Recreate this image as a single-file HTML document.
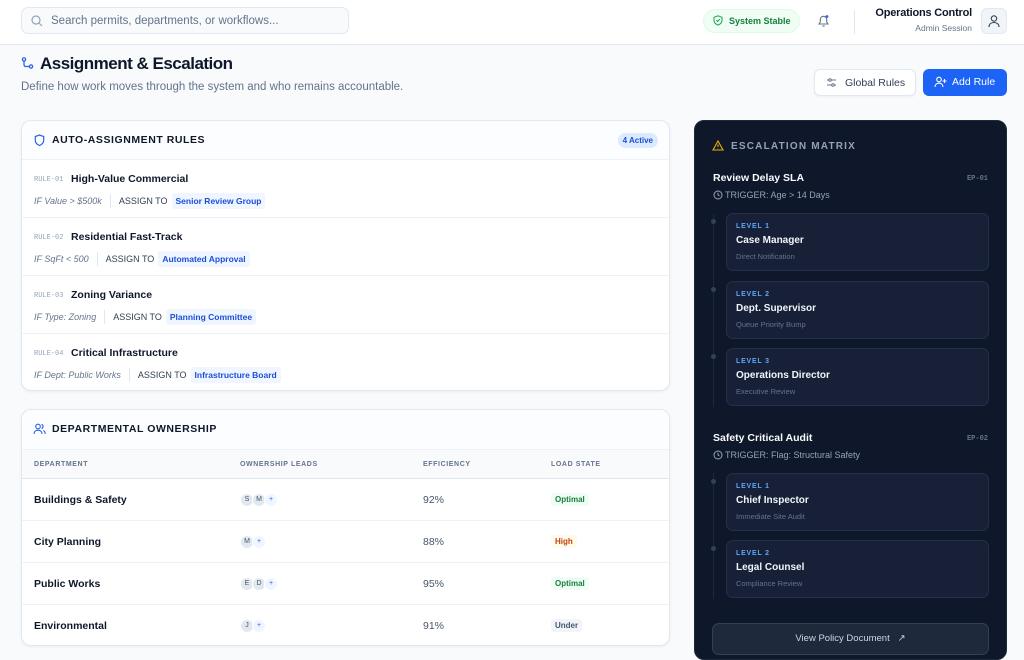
<!DOCTYPE html>
<html><head><meta charset="utf-8"><style>
*{box-sizing:border-box;margin:0;padding:0}
body{width:1024px;height:648px;overflow:hidden;background:#f8fafc;font-family:"Liberation Sans",sans-serif;color:#0f172a;position:relative}
.abs{position:absolute}
.hdr{position:absolute;left:0;top:0;width:1024px;height:45px;background:#fff;border-bottom:1px solid #e2e8f0}
.search{position:absolute;left:21px;top:7px;width:328px;height:27px;border:1px solid #e2e8f0;border-radius:7px;background:#f8fafc;font-size:11.5px;color:#64748b;padding:7px 0 0 29px}
.card{position:absolute;background:#fff;border:1px solid #e2e8f0;border-radius:10px;box-shadow:0 1px 3px rgba(0,0,0,.06);overflow:hidden}
.ch{height:39px;border-bottom:1px solid #eef2f6;background:#fcfdfe;font-size:10.5px;font-weight:bold;letter-spacing:.55px;padding:13px 0 0 30px;position:relative}
.rule{height:58px;border-bottom:1px solid #eef2f6;position:relative}
.rule:last-child{border-bottom:none}
.rid{position:absolute;left:12px;top:16px;font-family:"Liberation Mono",monospace;font-size:7px;color:#94a3b8}
.rt{position:absolute;left:49px;top:13px;font-size:10.5px;font-weight:bold}
.rc{position:absolute;left:12px;top:33px;font-size:9px;color:#64748b;font-style:italic;display:flex;align-items:center}
.rc .sep{width:1px;height:14px;background:#e2e8f0;margin:0 8px 0 8px}
.rc .as{font-style:normal;color:#334155;margin-right:4px}
.rc .tag{font-style:normal;color:#1d4ed8;background:#eff6ff;font-weight:bold;padding:3px 4px;border-radius:3px;font-size:8.5px}
.th{height:29px;background:#f8fafc;border-bottom:1px solid #e2e8f0;position:relative;font-size:7px;font-weight:bold;color:#64748b;letter-spacing:.6px}
.th span,.tr span{position:absolute}
.tr{height:42px;border-bottom:1px solid #eef2f6;position:relative}
.tr:last-child{border-bottom:none}
.dn{left:12px;top:15px;font-size:10.5px;font-weight:bold}
.ef{left:401px;top:15px;font-size:10.5px;color:#475569}
.av{width:14px;height:14px;border-radius:50%;background:#e2e8f0;font-size:7px;color:#475569;text-align:center;line-height:12px;top:14px;border:1px solid #fff}
.av.p{background:#eff6ff;color:#2563eb}
.ls{left:529px;top:14px;font-size:8px;font-weight:bold;padding:2px 4px;border-radius:3px}
.dark{position:absolute;left:694px;top:120px;width:313px;height:540px;background:#0f172a;border-radius:10px;border:1px solid #1e293b}
.lv{position:absolute;left:31px;width:263px;height:58px;background:#172036;border:1px solid #243049;border-radius:7px}
.lv .l{position:absolute;left:9px;top:9px;font-size:7px;font-weight:bold;color:#60a5fa;letter-spacing:.8px}
.lv .n{position:absolute;left:9px;top:21px;font-size:10px;font-weight:bold;color:#f1f5f9}
.lv .d{position:absolute;left:9px;top:38px;font-size:7.5px;color:#64748b}
.dot{position:absolute;left:16px;width:5px;height:5px;border-radius:50%;background:#334155}
.ep{position:absolute;right:18px;font-family:"Liberation Mono",monospace;font-size:7px;color:#64748b;font-weight:bold}
.et{position:absolute;left:18px;font-size:10.5px;font-weight:bold;color:#f8fafc}
.tg{position:absolute;left:18px;font-size:9px;color:#94a3b8}
</style></head><body>
<div class="hdr">
<div class="search">Search permits, departments, or workflows...</div>
<svg class="abs" style="left:31px;top:15px" width="12" height="12" viewBox="0 0 12 12" fill="none" stroke="#94a3b8" stroke-width="1.2"><circle cx="5" cy="5" r="4"/><path d="M8 8l3 3"/></svg>
<div class="abs" style="left:703px;top:9px;width:97px;height:24px;border-radius:12px;background:#f0fdf4;border:1px solid #dcfce7;font-size:9px;font-weight:bold;color:#15803d;padding:6px 0 0 25px">System Stable</div>
<svg class="abs" style="left:713px;top:15px" width="10" height="11" viewBox="0 0 10 11" fill="none" stroke="#16a34a" stroke-width="1"><path d="M5 .8L1 2.3v3c0 2.4 1.8 4 4 4.8 2.2-.8 4-2.4 4-4.8v-3z"/><path d="M3.3 5.3l1.2 1.2 2.3-2.4"/></svg>
<svg class="abs" style="left:817px;top:14px" width="13" height="14" viewBox="0 0 13 14" fill="none" stroke="#64748b" stroke-width="1.1"><path d="M2 10h9l-1.3-2V5.5a3.2 3.2 0 0 0-6.4 0V8z"/><path d="M5.3 12h2.4"/><circle cx="10" cy="2.5" r="1.4" fill="#2563eb" stroke="none"/></svg>
<div class="abs" style="left:854px;top:10px;width:1px;height:24px;background:#e2e8f0"></div>
<div class="abs" style="right:52px;top:7px;font-size:11px;font-weight:bold;text-align:right;letter-spacing:-.2px">Operations Control</div>
<div class="abs" style="right:52px;top:23px;font-size:8.5px;color:#64748b">Admin Session</div>
<div class="abs" style="left:981px;top:8px;width:26px;height:26px;border-radius:6px;background:#f1f5f9;border:1px solid #e2e8f0"></div>
<svg class="abs" style="left:987px;top:14px" width="14" height="14" viewBox="0 0 14 14" fill="none" stroke="#334155" stroke-width="1.1"><circle cx="7" cy="4.5" r="2.7"/><path d="M2 13c0-3 2.2-4.5 5-4.5s5 1.5 5 4.5"/></svg>
</div>
<svg class="abs" style="left:21px;top:57px" width="13" height="13" viewBox="0 0 13 13" fill="none" stroke="#2563eb" stroke-width="1.3"><circle cx="3" cy="2.5" r="1.6"/><circle cx="10" cy="9.5" r="1.6"/><path d="M3 4.1v3.4c0 1.2.8 2 2 2h3.4"/></svg>
<div class="abs" style="left:40px;top:54px;font-size:17px;font-weight:bold;letter-spacing:-.5px">Assignment &amp; Escalation</div>
<div class="abs" style="left:21px;top:81px;font-size:11.5px;color:#64748b">Define how work moves through the system and who remains accountable.</div>
<div class="abs" style="left:814px;top:69px;width:102px;height:27px;background:#fff;border:1px solid #e2e8f0;border-radius:6px;box-shadow:0 1px 2px rgba(0,0,0,.05);font-size:10.5px;color:#334155;padding:7px 0 0 30px">Global Rules</div>
<svg class="abs" style="left:826px;top:77px" width="11" height="11" viewBox="0 0 11 11" fill="none" stroke="#64748b" stroke-width="1"><path d="M1 3h9M1 8h9"/><circle cx="4" cy="3" r="1.3" fill="#fff"/><circle cx="7" cy="8" r="1.3" fill="#fff"/></svg>
<div class="abs" style="left:923px;top:69px;width:84px;height:27px;background:#1d63f5;border-radius:6px;font-size:10.5px;color:#fff;padding:7px 0 0 29px">Add Rule</div>
<svg class="abs" style="left:934px;top:76px" width="13" height="12" viewBox="0 0 13 12" fill="none" stroke="#fff" stroke-width="1.1"><circle cx="5" cy="3.5" r="2.3"/><path d="M1 11c0-2.5 1.8-3.8 4-3.8s4 1.3 4 3.8M10.5 3v4M8.5 5h4"/></svg>

<div class="card" style="left:21px;top:120px;width:649px;height:271px">
<div class="ch">AUTO-ASSIGNMENT RULES
<svg class="abs" style="left:12px;top:13px" width="11" height="13" viewBox="0 0 11 13" fill="none" stroke="#2563eb" stroke-width="1.2"><path d="M5.5 1L1.3 2.5v3.5c0 2.8 1.8 4.6 4.2 5.5 2.4-.9 4.2-2.7 4.2-5.5V2.5z"/></svg>
<span class="abs" style="right:11px;top:12px;background:#dbeafe;color:#1d4ed8;font-size:8px;letter-spacing:0;padding:3px 5px;border-radius:8px">4 Active</span></div>
<div class="rule"><span class="rid">RULE-01</span><span class="rt">High-Value Commercial</span><div class="rc">IF Value &gt; $500k<span class="sep"></span><span class="as">ASSIGN TO</span><span class="tag">Senior Review Group</span></div></div>
<div class="rule"><span class="rid">RULE-02</span><span class="rt">Residential Fast-Track</span><div class="rc">IF SqFt &lt; 500<span class="sep"></span><span class="as">ASSIGN TO</span><span class="tag">Automated Approval</span></div></div>
<div class="rule"><span class="rid">RULE-03</span><span class="rt">Zoning Variance</span><div class="rc">IF Type: Zoning<span class="sep"></span><span class="as">ASSIGN TO</span><span class="tag">Planning Committee</span></div></div>
<div class="rule"><span class="rid">RULE-04</span><span class="rt">Critical Infrastructure</span><div class="rc">IF Dept: Public Works<span class="sep"></span><span class="as">ASSIGN TO</span><span class="tag">Infrastructure Board</span></div></div>
</div>

<div class="card" style="left:21px;top:409px;width:649px;height:237px">
<div class="ch" style="height:40px">DEPARTMENTAL OWNERSHIP
<svg class="abs" style="left:11px;top:13px" width="13" height="12" viewBox="0 0 13 12" fill="none" stroke="#2563eb" stroke-width="1.1"><circle cx="5" cy="3.5" r="2.3"/><path d="M1 11c0-2.5 1.8-3.8 4-3.8s4 1.3 4 3.8M8.5 1.4a2.2 2.2 0 0 1 0 4.2M10.3 7.5c1.2.5 1.9 1.6 1.9 3.5"/></svg></div>
<div class="th"><span style="left:12px;top:11px">DEPARTMENT</span><span style="left:218px;top:11px">OWNERSHIP LEADS</span><span style="left:401px;top:11px">EFFICIENCY</span><span style="left:529px;top:11px">LOAD STATE</span></div>
<div class="tr"><span class="dn">Buildings &amp; Safety</span><span class="av" style="left:218px">S</span><span class="av" style="left:230px">M</span><span class="av p" style="left:242px">+</span><span class="ef">92%</span><span class="ls" style="background:#f0fdf4;color:#15803d">Optimal</span></div>
<div class="tr"><span class="dn">City Planning</span><span class="av" style="left:218px">M</span><span class="av p" style="left:230px">+</span><span class="ef">88%</span><span class="ls" style="background:#fffbeb;color:#c2410c">High</span></div>
<div class="tr"><span class="dn">Public Works</span><span class="av" style="left:218px">E</span><span class="av" style="left:230px">D</span><span class="av p" style="left:242px">+</span><span class="ef">95%</span><span class="ls" style="background:#f0fdf4;color:#15803d">Optimal</span></div>
<div class="tr"><span class="dn">Environmental</span><span class="av" style="left:218px">J</span><span class="av p" style="left:230px">+</span><span class="ef">91%</span><span class="ls" style="background:#f1f5f9;color:#475569">Under</span></div>
</div>

<div class="dark">
<svg class="abs" style="left:17px;top:19px" width="12" height="11" viewBox="0 0 12 11" fill="none" stroke="#eab308" stroke-width="1.1"><path d="M6 1L1 10h10z"/><path d="M6 4.5v2.5M6 8.3v.3"/></svg>
<div class="abs" style="left:36px;top:20px;font-size:10px;font-weight:bold;letter-spacing:1.2px;color:#94a3b8">ESCALATION MATRIX</div>
<div class="et" style="top:51px">Review Delay SLA</div><div class="ep" style="top:54px">EP-01</div>
<div class="tg" style="top:69px;padding-left:12px">TRIGGER: Age &gt; 14 Days</div>
<svg class="abs" style="left:18px;top:69px" width="10" height="10" viewBox="0 0 10 10" fill="none" stroke="#94a3b8" stroke-width="1"><circle cx="5" cy="5" r="4"/><path d="M5 2.7V5l1.5 1"/></svg>
<div class="abs" style="left:18px;top:93px;width:1px;height:193px;background:#1e293b"></div>
<div class="dot" style="left:16px;top:98px"></div><div class="dot" style="left:16px;top:166px"></div><div class="dot" style="left:16px;top:233px"></div>
<div class="lv" style="top:92px"><span class="l">LEVEL 1</span><span class="n">Case Manager</span><span class="d">Direct Notification</span></div>
<div class="lv" style="top:160px"><span class="l">LEVEL 2</span><span class="n">Dept. Supervisor</span><span class="d">Queue Priority Bump</span></div>
<div class="lv" style="top:227px"><span class="l">LEVEL 3</span><span class="n">Operations Director</span><span class="d">Executive Review</span></div>
<div class="et" style="top:311px">Safety Critical Audit</div><div class="ep" style="top:314px">EP-02</div>
<div class="tg" style="top:329px;padding-left:12px">TRIGGER: Flag: Structural Safety</div>
<svg class="abs" style="left:18px;top:329px" width="10" height="10" viewBox="0 0 10 10" fill="none" stroke="#94a3b8" stroke-width="1"><circle cx="5" cy="5" r="4"/><path d="M5 2.7V5l1.5 1"/></svg>
<div class="abs" style="left:18px;top:352px;width:1px;height:126px;background:#1e293b"></div>
<div class="dot" style="left:16px;top:358px"></div><div class="dot" style="left:16px;top:425px"></div>
<div class="lv" style="top:352px"><span class="l">LEVEL 1</span><span class="n">Chief Inspector</span><span class="d">Immediate Site Audit</span></div>
<div class="lv" style="top:419px"><span class="l">LEVEL 2</span><span class="n">Legal Counsel</span><span class="d">Compliance Review</span></div>
<div class="abs" style="left:17px;top:502px;width:277px;height:32px;background:#1e293b;border:1px solid #334155;border-radius:7px;font-size:9.5px;color:#cbd5e1;text-align:center;padding-top:9px">View Policy Document &nbsp;&nbsp;↗</div>
</div>
</body></html>
